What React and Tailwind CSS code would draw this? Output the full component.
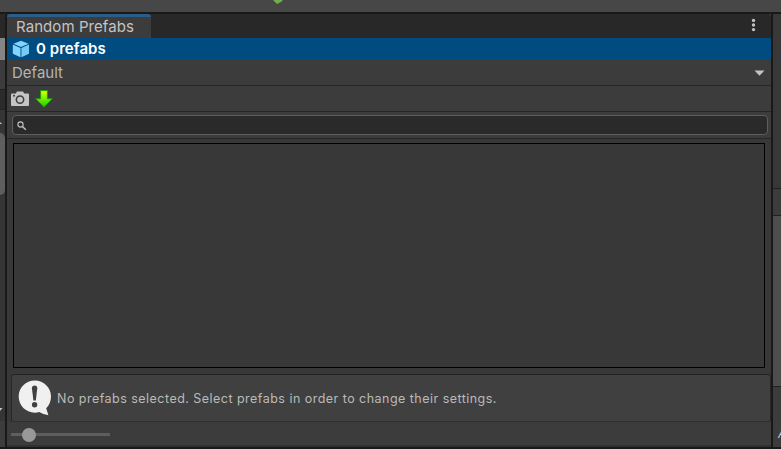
import React from "react";

function LeftEdge() {
  return (
    <div className="flex w-[5px] shrink-0 flex-col overflow-hidden bg-[#353535]">
      <div className="h-6 shrink-0 rounded-tr-[3px] bg-[#282828]" />
      <div className="h-[22px] shrink-0 bg-[#858585]" />
      <div className="h-[30px] shrink-0 border-b border-[#1f1f1f] bg-[#3c3c3c]" />
      <div className="h-5 shrink-0 border-b border-[#242424] bg-[#2b2b2b]" />
      <svg className="mt-[11px] shrink-0" width="5" height="4" viewBox="0 0 5 4">
        <path d="M-1 0L2 3H-1z" fill="#c4c4c4" />
      </svg>
      <div className="mt-2 h-[62px] shrink-0 rounded-r-[5px] bg-[#5e5e5e]" />
      <svg className="mt-[213px] shrink-0" width="5" height="4" viewBox="0 0 5 4">
        <path d="M0 0H2.5L0 3z" fill="#c4c4c4" />
      </svg>
      <div className="mt-[9px] grow bg-[#3c3c3c]" />
    </div>
  );
}

function RightEdge() {
  return (
    <div className="flex w-2 shrink-0 flex-col overflow-hidden bg-[#3c3c3c]">
      <div className="h-[175px] shrink-0 border-b border-[#1f1f1f] bg-[#383838]" />
      <div className="h-[27px] shrink-0 border-b border-[#1f1f1f] bg-[#3c3c3c]" />
      <div className="h-[171px] shrink-0 border-b border-[#1f1f1f] bg-[#4d4d4d]" />
      <span className="ml-[5px] mt-[40px] text-[12px] italic leading-[14px] text-[#d0d0d0]">A</span>
    </div>
  );
}

function PrefabIcon() {
  return (
    <svg width="18" height="18" viewBox="0 0 18 18">
      <path d="M9 .8L16.6 3.7L9 6.9L1.4 3.7z" fill="#7fd6fd" />
      <path d="M.8 4.6L8.5 7.9V17.2L.8 13.8z" fill="#7fd6fd" />
      <path d="M17 4.6L9.4 7.9V17.2L17 13.8z" fill="#74cbf5" />
    </svg>
  );
}

function CameraIcon() {
  return (
    <svg width="18" height="16" viewBox="0 0 18 16">
      <path d="M1 2.4H4.8L6 .6H12L13.2 2.4H17Q18 2.4 18 3.4V14Q18 15 17 15H1Q0 15 0 14V3.4Q0 2.4 1 2.4z" fill="#c4c4c4" />
      <circle cx="9" cy="8.6" r="3.7" fill="none" stroke="#3c3c3c" strokeWidth="1.5" />
      <circle cx="3" cy="4.8" r="1" fill="#3c3c3c" />
    </svg>
  );
}

function DownArrow() {
  return (
    <svg width="18" height="18" viewBox="0 0 18 18">
      <defs>
        <linearGradient id="lime" x1="0" y1="0" x2="0" y2="1">
          <stop offset="0" stopColor="#e6ff00" />
          <stop offset=".5" stopColor="#75ee00" />
          <stop offset="1" stopColor="#13cd00" />
        </linearGradient>
      </defs>
      <path d="M5.6.6H12.4V8.8H17.2L9 17.2L.8 8.8H5.6z" fill="url(#lime)" stroke="#1c9c0c" strokeWidth="1" strokeLinejoin="round" />
    </svg>
  );
}

function Message() {
  return (
    <div className="ml-1 flex h-12 shrink-0 items-center rounded-[3px] border border-b-[#303030] border-x-[#282828] border-t-[#232323] bg-[#404040]">
      <svg className="ml-1.5" width="36" height="38" viewBox="0 0 36 38">
        <path d="M16.8 1.6C25.8 1.6 33 8.6 33 17.6C33 22.2 31.4 26.2 28.2 29.2L30.4 36.2C26.7 35.7 23.6 34.6 21.4 33.1C10.2 36 .7 28 .7 17.6C.7 8.6 7.8 1.6 16.8 1.6z" fill="#f0f0f0" />
        <path d="M13.9 9.2C13.9 7.5 15 6.6 16.6 6.6S19.3 7.5 19.3 9.2L17.8 21.6H15.4z" fill="#404040" />
        <circle cx="16.6" cy="25.8" r="2.7" fill="#404040" />
      </svg>
      <span className="ml-[3px] mt-0.5 text-[12.5px] tracking-[0.47px] text-[#bababa]">
        No prefabs selected. Select prefabs in order to change their settings.
      </span>
    </div>
  );
}

function PrefabPanel() {
  return (
    <main className="flex min-w-0 grow flex-col bg-[#3c3c3c]">
      <div className="flex h-6 shrink-0 items-stretch justify-between rounded-tr-[4px] bg-[#282828]">
        <div className="flex w-[144px] items-center rounded-t-[3px] border-t-[3px] border-[#2c5d87] bg-[#3c3c3c] pl-[9px] text-[15px] tracking-[0.07px] text-[#c4c4c4]">
          Random Prefabs
        </div>
        <svg className="mr-[15px] mt-1" width="5" height="14" viewBox="0 0 5 14">
          <g fill="#c4c4c4">
            <circle cx="2.5" cy="2.4" r="1.65" />
            <circle cx="2.5" cy="7" r="1.65" />
            <circle cx="2.5" cy="11.6" r="1.65" />
          </g>
        </svg>
      </div>
      <div className="flex h-[22px] shrink-0 items-center bg-[#004b80] pl-[5px] text-[15px] font-semibold tracking-[0.05px] text-white">
        <PrefabIcon />
        <span className="ml-1.5">0 prefabs</span>
      </div>
      <div className="flex h-[26px] shrink-0 items-center justify-between border-b border-[#272727] pl-[5px] pr-1.5 text-[15px] text-[#b4b4b4]">
        <span className="pt-px">Default</span>
        <svg width="11" height="6" viewBox="0 0 11 6">
          <path d="M.5.5H10.5L5.5 5.7z" fill="#c4c4c4" />
        </svg>
      </div>
      <div className="flex h-[26px] shrink-0 items-center gap-1.5 border-b border-[#272727] pl-1">
        <CameraIcon />
        <DownArrow />
      </div>
      <div className="h-[27px] shrink-0 border-b border-[#272727] pl-[5px] pr-[3px] pt-[3px]">
        <div className="flex h-5 items-center rounded-[4px] border border-[#5e5e5e] bg-[#2a2a2a] pl-1">
          <svg className="mt-px" width="10" height="10" viewBox="0 0 10 10" fill="none" stroke="#c4c4c4">
            <circle cx="3.5" cy="3.5" r="2.6" strokeWidth="1.1" />
            <path d="M5.4 5.4L8.8 8.8" strokeWidth="1.4" />
          </svg>
        </div>
      </div>
      <div className="flex grow flex-col bg-[#383838]">
        <div className="ml-1.5 mr-1.5 mt-1 h-[225px] border border-black bg-[#383838]" />
        <div className="mt-1.5 flex grow flex-col">
          <Message />
          <div className="flex grow items-center border-b-2 border-[#303030] bg-[#3c3c3c] pl-1 pt-px">
            <div className="flex h-[3px] w-[99px] items-center bg-[#5e5e5e] pl-[11px]">
              <div className="mt-px size-[14px] shrink-0 rounded-full bg-[#999999]" />
            </div>
          </div>
        </div>
      </div>
    </main>
  );
}

export default function App() {
  return (
    <div className="flex h-[449px] w-[781px] flex-col overflow-hidden bg-[#191919] font-[Inter,'Liberation_Sans',sans-serif]">
      <div className="flex h-3 shrink-0 bg-[#474747]">
        <svg className="ml-[272px]" width="12" height="5" viewBox="0 0 12 5">
          <path d="M1 0H11L9 2L5 4L3 2z" fill="#73ad4c" />
        </svg>
      </div>
      <div className="flex h-[435px] shrink-0 pt-0.5">
        <LeftEdge />
        <div className="w-0.5 shrink-0" />
        <PrefabPanel />
        <div className="w-0.5 shrink-0" />
        <RightEdge />
      </div>
    </div>
  );
}
